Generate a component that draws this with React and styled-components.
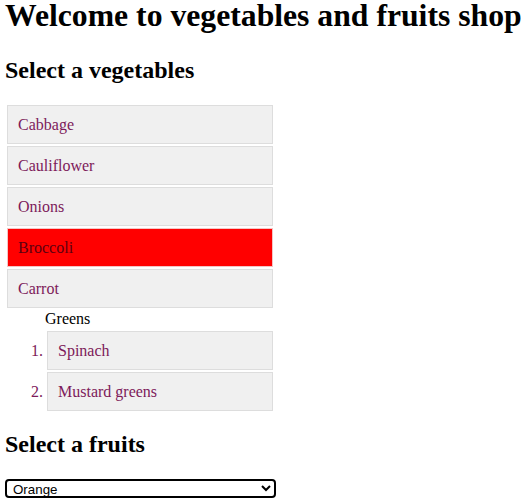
import styled, { createGlobalStyle } from 'styled-components';

const GlobalStyle = createGlobalStyle`
    body {
        margin: 0;
        background: #FFFFFF;
        font-family: "Liberation Serif", "Times New Roman", serif;
        color: #000000;
    }
`

const vegetables = ["Cabbage", "Cauliflower", "Onions", "Broccoli", "Carrot"];
const greens = ["Spinach", "Mustard greens"];
const fruits = ["Orange", "Apple", "Banana", "Mango", "Grapes"];

export default function App() {
    return (
        <>
            <GlobalStyle />
            <Page>
                <Title>Welcome to vegetables and fruits shop</Title>
                <Heading>Select a vegetables</Heading>
                <List>
                    {vegetables.map(name =>
                        <Item key={name} selected={name === "Broccoli"}>{name}</Item>
                    )}
                    <Group>
                        <GroupLabel>Greens</GroupLabel>
                        <SubList>
                            {greens.map(name =>
                                <Item key={name}>{name}</Item>
                            )}
                        </SubList>
                    </Group>
                </List>
                <Heading>Select a fruits</Heading>
                <FruitSelect defaultValue="Orange">
                    {fruits.map(fruit =>
                        <option key={fruit} value={fruit}>{fruit}</option>
                    )}
                </FruitSelect>
            </Page>
        </>
    );
}

const Page = styled.div`
    padding: 0 0 0 5px;
`

const Title = styled.h1`
    font-size: 31.7px;
    line-height: 32.6px;
    font-weight: 700;
    margin: 0 0 24px;
`

const Heading = styled.h2`
    font-size: 24px;
    font-weight: 700;
    margin: 20px 0 21px;
`

const List = styled.ul`
    list-style: none;
    width: 266px;
    margin: 16px 0;
    padding: 0 0 0 2px;
`

const Item = styled.li`
    background: ${props => props.selected ? "#FF0000" : "#F0F0F0"};
    border: 1px solid ${props => props.selected ? "#F4C4C4" : "#DDDDDD"};
    color: ${props => props.selected ? "#5C0010" : "#7D1A5A"};
    font-size: 16px;
    line-height: 17px;
    padding: 10px;
    margin-bottom: 2px;
`

const Group = styled.li`
    color: #000000;
    font-size: 16px;
    line-height: 18px;
`

const GroupLabel = styled.div`
    padding-left: 38px;
`

const SubList = styled.ol`
    list-style: decimal;
    margin: 3px 0 0;
    padding-left: 40px;

    li::marker {
        color: #7D1A5A;
    }
`

const FruitSelect = styled.select`
    display: block;
    width: 271px;
    height: 19px;
    box-sizing: border-box;
    padding: 0 2px;
    font-family: "Liberation Sans", Arial, sans-serif;
    font-size: 13.33px;
    color: #000000;
    background: #FFFFFF;
    border: 2px solid #000000;
    border-radius: 4px;
`
